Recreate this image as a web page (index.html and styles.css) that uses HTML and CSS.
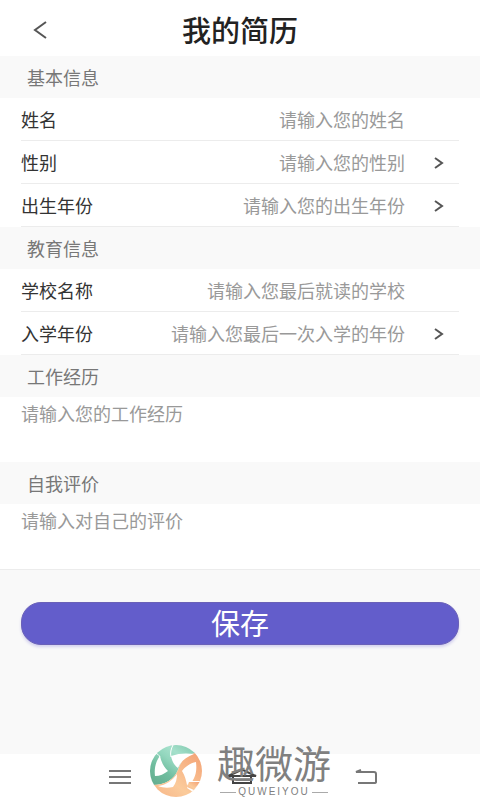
FILE: index.html
```html
<!DOCTYPE html>
<html lang="zh-CN">
<head>
<meta charset="utf-8">
<meta name="viewport" content="width=device-width, initial-scale=1">
<title>我的简历</title>
<link rel="stylesheet" href="styles.css">
</head>
<body>
<header class="header">
  <button class="back" type="button" aria-label="返回"><svg width="14" height="18" viewBox="0 0 14 18"><path d="M13 1 2 9l11 8"/></svg></button>
  <h1 class="title">我的简历</h1>
</header>
<form class="form">
  <h2 class="section">基本信息</h2>
  <div class="rows">
    <div class="row">
      <label for="name">姓名</label>
      <input id="name" type="text" placeholder="请输入您的姓名">
    </div>
    <div class="row">
      <label for="gender">性别</label>
      <select id="gender"><option>请输入您的性别</option></select>
      <svg class="chevron" width="10" height="14" viewBox="0 0 10 14"><path d="m1 3 7 5-7 5"/></svg>
    </div>
    <div class="row">
      <label for="birth">出生年份</label>
      <select id="birth"><option>请输入您的出生年份</option></select>
      <svg class="chevron" width="10" height="14" viewBox="0 0 10 14"><path d="m1 3 7 5-7 5"/></svg>
    </div>
  </div>
  <h2 class="section">教育信息</h2>
  <div class="rows">
    <div class="row">
      <label for="school">学校名称</label>
      <input id="school" type="text" placeholder="请输入您最后就读的学校">
    </div>
    <div class="row">
      <label for="enrol">入学年份</label>
      <select id="enrol"><option>请输入您最后一次入学的年份</option></select>
      <svg class="chevron" width="10" height="14" viewBox="0 0 10 14"><path d="m1 3 7 5-7 5"/></svg>
    </div>
  </div>
  <h2 class="section"><label for="work">工作经历</label></h2>
  <textarea id="work" class="area" placeholder="请输入您的工作经历"></textarea>
  <h2 class="section"><label for="self">自我评价</label></h2>
  <textarea id="self" class="area" placeholder="请输入对自己的评价"></textarea>
  <div class="actions"><button class="save" type="submit">保存</button></div>
</form>
<nav class="nav">
  <button type="button" aria-label="菜单"><svg width="24" height="18" viewBox="0 0 24 18"><path d="M1 3h22M1 9h22M1 15h22"/></svg></button>
  <button type="button" aria-label="主页"><svg class="home" width="32" height="18" viewBox="0 0 32 18"><path d="M1 8 12 3q3-2 6 0l11 5H1M6 9v6h18V9"/></svg></button>
  <button type="button" aria-label="后退"><svg width="24" height="18" viewBox="0 0 24 18"><path d="M7 2 2 4h18q2 0 2 2v8q0 1-2 1H4"/></svg></button>
  <div class="brand">
    <svg width="54" height="54" viewBox="0 0 54 54">
      <defs>
        <clipPath id="disc"><circle cx="27" cy="27" r="26"/></clipPath>
        <linearGradient id="mint" x1="0" y1="1" x2="1" y2="0"><stop offset="0" stop-color="#62aa8c"/><stop offset=".3" stop-color="#70bd9f"/><stop offset=".5" stop-color="#92d6bd"/><stop offset=".65" stop-color="#a5e0cb"/><stop offset="1" stop-color="#70bea1"/></linearGradient>
        <linearGradient id="peach" x1="0" y1="1" x2="1" y2="0"><stop offset="0" stop-color="#f6b184"/><stop offset=".4" stop-color="#fbcb9b"/><stop offset="1" stop-color="#f3a073"/></linearGradient>
      </defs>
      <g clip-path="url(#disc)">
        <path fill="url(#mint)" d="M0 0h54v9H47C38 10 32 16 29 26 25 36 15 42 0 41Z"/>
        <path fill="url(#peach)" d="M0 41c15 1 25-5 29-15C32 16 38 10 47 9h7v45H0Z"/>
        <path fill="#fff" d="M11 12c1 5 3 10 8 15-4 3-8 5-13 5-1-8 1-15 5-20Z"/>
        <path fill="#fff" d="M22 12c8-3 16-3 23-2-8 3-13 7-16 14-4-3-6-7-7-12Z"/>
        <path fill="#fff" d="M9 42c8-1 14-5 19-12 0 5-1 9-4 13-5 1-10 1-15-1Z"/>
        <path fill="#fff" d="M33 27c3-4 8-8 14-9 1 8 0 15-5 21l-4 2c-1-5-2-9-5-14Z"/>
        <path fill="#fff" d="M40 37h14l-10 11-6-4Z"/>
        <path fill="url(#peach)" d="M40 38l11 0-6 8-7-3Z"/>
      </g>
      <path stroke="#fff" d="M6 9c3 1 4 2 5 4M24 1c-2 4-3 8-2 12"/>
    </svg>
    <div class="brand-text">
      <span class="brand-name">趣微游</span>
      <span class="brand-sub">QUWEIYOU</span>
    </div>
  </div>
</nav>
</body>
</html>
```

FILE: styles.css
```css
* { box-sizing: border-box; }
body {
  margin: 0;
  min-height: 100vh;
  display: flex;
  flex-direction: column;
  background: #fff;
  color: #333;
  font: 18px/24px "Noto Sans CJK SC", sans-serif;
}
button, input, select, textarea {
  margin: 0;
  padding: 0;
  border: 0;
  background: none;
  color: inherit;
  font: inherit;
  outline: 0;
}
svg { display: block; fill: none; }
.header {
  display: grid;
  grid-template-columns: 56px 1fr 56px;
  align-items: center;
  height: 56px;
  padding-top: 2px;
}
.back { padding: 6px 0 4px 33px; }
.back svg { stroke: #555; stroke-width: 2; }
.title {
  margin: 0;
  text-align: center;
  color: #222;
  font-size: 29px;
  font-weight: 500;
  line-height: 48px;
}
.form {
  flex: 1;
  display: flex;
  flex-direction: column;
}
.section {
  margin: 0;
  padding: 9px 27px;
  background: #f9f9f9;
  color: #777;
  font-size: 18px;
  font-weight: 400;
}
.rows { padding: 0 21px; }
.row {
  display: flex;
  align-items: center;
  height: 43px;
  padding-right: 15px;
  border-bottom: 1px solid #ececec;
}
.row input, .row select {
  flex: 1;
  min-width: 0;
  height: 32px;
  margin-right: 39px;
  appearance: none;
  color: #999;
  text-align: right;
  text-align-last: right;
}
.row select { margin-right: 29px; }
.chevron { stroke: #555; stroke-width: 2; }
::placeholder { color: #999; opacity: 1; }
.area {
  display: block;
  width: 100%;
  height: 65px;
  padding: 4px 21px;
  resize: none;
}
.actions {
  flex: 1;
  padding: 32px 21px;
  border-top: 1px solid #ececec;
  background: #f9f9f9;
}
.save {
  display: block;
  width: 100%;
  height: 43px;
  padding-bottom: 4px;
  border: 1px solid #6a61b8;
  border-radius: 20px;
  background: #635dcb;
  box-shadow: 0 2px 3px #d3d1ee;
  color: #fff;
  font-size: 29px;
  line-height: 36px;
}
.nav {
  position: relative;
  display: flex;
  justify-content: center;
  align-items: center;
  gap: 95px;
  height: 46px;
  padding-left: 6px;
}
.nav button svg { stroke: #777; stroke-width: 2; }
.nav .home { stroke: #444; }
.brand {
  position: absolute;
  left: 50%;
  bottom: 2px;
  display: flex;
  gap: 14px;
  transform: translateX(-50%);
  pointer-events: none;
}
.brand-text {
  display: flex;
  flex-direction: column;
  justify-content: space-between;
  align-items: center;
  color: #808080;
}
.brand-name { font-size: 38px; line-height: 36px; }
.brand-sub {
  display: flex;
  align-items: center;
  gap: 2px;
  font: 10px/12px "Liberation Sans", sans-serif;
  letter-spacing: 2px;
}
.brand-sub::before, .brand-sub::after {
  content: "";
  width: 16px;
  height: 1px;
  background: #aaa;
}
```
